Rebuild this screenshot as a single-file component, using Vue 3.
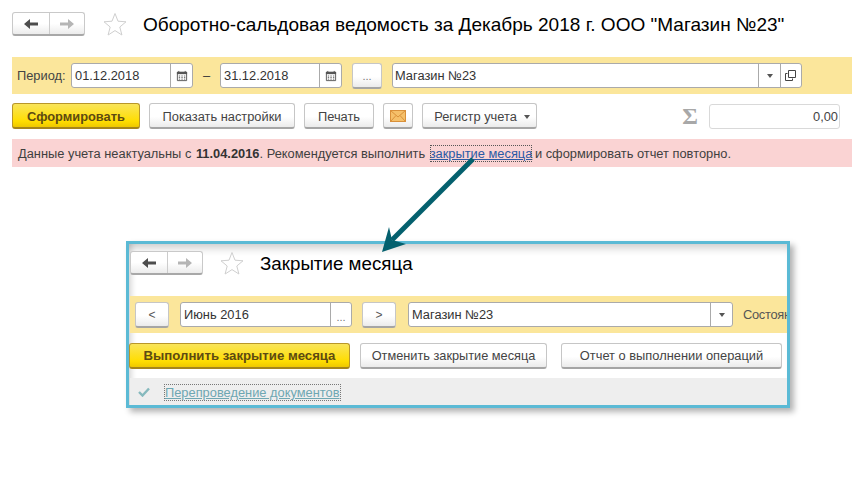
<script setup>
const navArrow = {
  back: 'M1 6 L7 1 V4.5 H15 V7.5 H7 V11 Z',
  forward: 'M15 6 L9 1 V4.5 H1 V7.5 H9 V11 Z'
}
const star = 'M12 1.5 L15 9.2 L23 9.8 L16.8 15 L18.9 23 L12 18.6 L5.1 23 L7.2 15 L1 9.8 L9 9.2 Z'
</script>

<template>
  <div class="page">
    <header class="head">
      <div class="nav">
        <span class="nav-cell"><svg width="16" height="12" viewBox="0 0 16 12"><path :d="navArrow.back" fill="#4d4d4d" /></svg></span>
        <span class="nav-cell"><svg width="16" height="12" viewBox="0 0 16 12"><path :d="navArrow.forward" fill="#b5b5b5" /></svg></span>
      </div>
      <svg class="star" width="24" height="24" viewBox="0 0 24 24"><path :d="star" fill="#fff" stroke="#cfcfcf" /></svg>
      <h1 class="title">Оборотно-сальдовая ведомость за Декабрь 2018 г. ООО "Магазин №23"</h1>
    </header>

    <div class="filters">
      <span class="label">Период:</span>
      <div class="field date">
        <span class="value">01.12.2018</span>
        <span class="addon cal"><svg width="12" height="12" viewBox="0 0 13 13"><path d="M1.5 2.5h10v9h-10z" fill="#fff" stroke="#555" /><path d="M1 2h11v2.5H1z" fill="#555" /><path d="M3 1v2M10 1v2" stroke="#555" /><path d="M3 6.5h1.5M5.8 6.5h1.5M8.6 6.5h1.5M3 8.2h1.5M5.8 8.2h1.5M8.6 8.2h1.5M3 9.9h1.5M5.8 9.9h1.5M8.6 9.9h1.5" stroke="#666" /></svg></span>
      </div>
      <span class="dash">–</span>
      <div class="field date">
        <span class="value">31.12.2018</span>
        <span class="addon cal"><svg width="12" height="12" viewBox="0 0 13 13"><path d="M1.5 2.5h10v9h-10z" fill="#fff" stroke="#555" /><path d="M1 2h11v2.5H1z" fill="#555" /><path d="M3 1v2M10 1v2" stroke="#555" /><path d="M3 6.5h1.5M5.8 6.5h1.5M8.6 6.5h1.5M3 8.2h1.5M5.8 8.2h1.5M8.6 8.2h1.5M3 9.9h1.5M5.8 9.9h1.5M8.6 9.9h1.5" stroke="#666" /></svg></span>
      </div>
      <button class="btn dots">...</button>
      <div class="field shop">
        <span class="value">Магазин №23</span>
        <span class="addon caret-cell"><i class="caret"></i></span>
        <span class="addon open"><svg width="12" height="12" viewBox="0 0 12 12"><path d="M3.5 .5h7v7h-7z" fill="#fff" stroke="#444" /><path d="M2.5 3.5h-2v7h7v-2" fill="none" stroke="#444" /></svg></span>
      </div>
    </div>

    <div class="actions">
      <button class="btn primary form-btn">Сформировать</button>
      <button class="btn settings-btn">Показать настройки</button>
      <button class="btn print-btn">Печать</button>
      <button class="btn mail-btn"><svg width="16" height="12" viewBox="0 0 16 12"><rect x=".5" y=".5" width="15" height="11" fill="#f5c06a" stroke="#d9903a" /><path d="M.5 .5 8 7 15.5 .5M.5 11.5 6 5.5M15.5 11.5 10 5.5" fill="none" stroke="#d9903a" /></svg></button>
      <button class="btn reg-btn">Регистр учета<i class="caret"></i></button>
      <span class="sigma">Σ</span>
      <div class="sum">0,00</div>
    </div>

    <div class="alert">Данные учета неактуальны с <b>11.04.2016</b>. Рекомендуется выполнить <a class="link">закрытие месяца</a> и сформировать отчет повторно.</div>

    <section class="panel">
      <div class="panel-head">
        <div class="nav">
          <span class="nav-cell"><svg width="16" height="12" viewBox="0 0 16 12"><path :d="navArrow.back" fill="#4d4d4d" /></svg></span>
          <span class="nav-cell"><svg width="16" height="12" viewBox="0 0 16 12"><path :d="navArrow.forward" fill="#b5b5b5" /></svg></span>
        </div>
        <svg class="star" width="24" height="24" viewBox="0 0 24 24"><path :d="star" fill="#fff" stroke="#cfcfcf" /></svg>
        <h2 class="title">Закрытие месяца</h2>
      </div>
      <div class="panel-filters">
        <button class="btn step">&lt;</button>
        <div class="field month">
          <span class="value">Июнь 2016</span>
          <span class="addon more">...</span>
        </div>
        <button class="btn step">&gt;</button>
        <div class="field pshop">
          <span class="value">Магазин №23</span>
          <span class="addon caret-cell"><i class="caret"></i></span>
        </div>
        <span class="state">Состояние</span>
      </div>
      <div class="panel-actions">
        <button class="btn primary run-btn">Выполнить закрытие месяца</button>
        <button class="btn cancel-btn">Отменить закрытие месяца</button>
        <button class="btn report-btn">Отчет о выполнении операций</button>
      </div>
      <div class="status">
        <svg width="12" height="10" viewBox="0 0 12 10"><path d="M1 5 4.5 8.5 11 1.5" fill="none" stroke="#86b9bd" stroke-width="2.4" /></svg>
        <span class="doc-link">Перепроведение документов</span>
      </div>
    </section>

    <svg class="arrow" width="852" height="479" viewBox="0 0 852 479">
      <path d="M473 159 392 240" stroke="#04606e" stroke-width="5" fill="none" />
      <path d="M382 252 389 227 392 240 406 244 Z" fill="#04606e" />
    </svg>
  </div>
</template>

<style>
html, body { margin: 0; background: #fff; }
</style>

<style scoped>
.page {
  position: relative;
  width: 852px;
  height: 479px;
  overflow: hidden;
  padding-top: 11px;
  box-sizing: border-box;
  font: 12.85px "Liberation Sans", Arial, sans-serif;
  color: #3a3a3a;
  background: #fff;
}
.head { display: flex; align-items: center; margin-left: 12px; height: 26px; }
.nav {
  display: flex;
  width: 73px;
  height: 24px;
  box-sizing: border-box;
  border: 1px solid #c9c9c9;
  border-bottom: 2px solid #a8a8a8;
  border-radius: 3px;
  background: linear-gradient(#fff 50%, #ececec);
  flex: none;
}
.nav-cell { flex: 1; display: flex; align-items: center; justify-content: center; }
.nav-cell:first-child { border-right: 1px solid #ccc; flex: 0 0 36px; }
.star { margin-left: 18px; flex: none; }
.title { margin: 2px 0 0 16px; font-size: 19.05px; font-weight: 400; color: #000; white-space: nowrap; line-height: 26px; }

.filters {
  display: flex;
  align-items: center;
  margin: 20px 0 0 12px;
  height: 37px;
  padding-left: 5px;
  background: #fbe69b;
}
.label { width: 54px; flex: none; color: #444; }
.field {
  display: flex;
  height: 25px;
  box-sizing: border-box;
  background: #fff;
  border: 1px solid #aaa;
  border-radius: 3px;
  flex: none;
  color: #333;
}
.value { flex: 1; padding-left: 3px; line-height: 23px; white-space: nowrap; }
.addon { display: flex; align-items: center; justify-content: center; border-left: 1px solid #aaa; flex: none; }
.date { width: 122px; }
.cal { width: 21px; }
.dash { width: 27px; text-align: center; flex: none; }
.shop { width: 410px; margin-left: 10px; }
.shop .value { padding-left: 2px; }
.caret-cell { width: 20px; }
.open { width: 20px; }
.caret { display: inline-block; width: 0; height: 0; border: 3.5px solid transparent; border-top: 4px solid #555; border-bottom: 0; }

.btn {
  display: block;
  height: 26px;
  box-sizing: border-box;
  padding: 1px 0 0;
  border: 1px solid #c6c6c6;
  border-bottom: 2px solid #a5a5a5;
  border-radius: 3px;
  background: linear-gradient(#fff 55%, #ebebeb);
  font: 12.85px "Liberation Sans", Arial, sans-serif;
  color: #444;
  flex: none;
  white-space: nowrap;
}
.dots { width: 30px; margin-left: 10px; color: #777; font-size: 11px; }
.primary {
  background: linear-gradient(#f9e45a, #ffdd00 75%, #eec800);
  border: 1px solid #b8962a;
  border-bottom: 2px solid #a5851c;
  font-weight: 700;
  color: #5d4a12;
}
.actions { display: flex; align-items: center; margin: 9px 0 0 12px; height: 26px; }
.form-btn { width: 128px; }
.settings-btn { width: 146px; margin-left: 9px; }
.print-btn { width: 70px; margin-left: 9px; }
.mail-btn { width: 30px; margin-left: 9px; display: flex; align-items: center; justify-content: center; }
.reg-btn { width: 115px; margin-left: 9px; padding-left: 5px; }
.reg-btn .caret { margin-left: 7px; vertical-align: middle; }
.sigma { width: 22px; margin-left: 142px; text-align: center; font: 700 24px/26px "Liberation Serif", serif; color: #a8a8a8; flex: none; }
.sum {
  width: 131px;
  height: 25px;
  margin-left: 8px;
  box-sizing: border-box;
  border: 1px solid #d9d9d9;
  border-radius: 3px;
  line-height: 23px;
  text-align: right;
  padding-right: 1px;
  color: #444;
  flex: none;
}
.alert {
  margin: 10px 0 0 12px;
  height: 28px;
  padding-left: 6px;
  line-height: 29px;
  background: #fad3d3;
  color: #3f3f3f;
  white-space: nowrap;
}
.alert b { color: #333; margin-left: 1px; }
.link { color: #2a5aa5; text-decoration: underline; outline: 1px dotted #555; outline-offset: -1px; padding: 1px 0; margin: 0 -1px 0 1px; }

.panel {
  width: 664px;
  height: 167px;
  margin: 74px 0 0 126px;
  padding-left: 1px;
  box-sizing: border-box;
  border: 3px solid #5bbad5;
  box-shadow: 4px 4px 6px rgba(0, 0, 0, .3), inset 0 10px 8px -6px rgba(0, 0, 0, .2), inset 7px 0 6px -5px rgba(0, 0, 0, .18);
  overflow: hidden;
}
.panel-head { display: flex; align-items: center; height: 24px; margin-top: 7px; }
.panel-head .star { margin-left: 17px; }
.panel-head .title { margin: 2px 0 0 16px; font-size: 18.75px; }
.panel-filters {
  display: flex;
  align-items: center;
  height: 37px;
  margin-top: 21px;
  padding-left: 5px;
  background: #fbe69b;
}
.step { width: 34px; color: #555; font-size: 12px; }
.month { width: 172px; margin: 0 10px 0 11px; }
.more { width: 21px; color: #777; font-size: 11px; padding-top: 4px; box-sizing: border-box; }
.pshop { width: 325px; margin-left: 12px; }
.caret-cell { width: 21px; }
.state { margin-left: 10px; white-space: nowrap; color: #555; letter-spacing: -.3px; }
.panel-actions { display: flex; height: 26px; margin-top: 10px; }
.panel-actions .btn { padding: 0 0 1px; }
.run-btn { width: 221px; margin-left: -1px; font-size: 13.2px; }
.cancel-btn { width: 187px; margin-left: 10px; font-size: 12.75px; }
.report-btn { width: 221px; margin-left: 14px; }
.status {
  display: flex;
  align-items: center;
  height: 27px;
  margin-top: 9px;
  padding-left: 8px;
  background: #eee;
}
.doc-link {
  margin: 2px 0 0 15px;
  line-height: 15px;
  color: #6ea7b2;
  text-decoration: underline;
  outline: 1px dotted #777;
  white-space: nowrap;
}
.arrow { position: absolute; left: 0; top: 0; pointer-events: none; }
</style>
